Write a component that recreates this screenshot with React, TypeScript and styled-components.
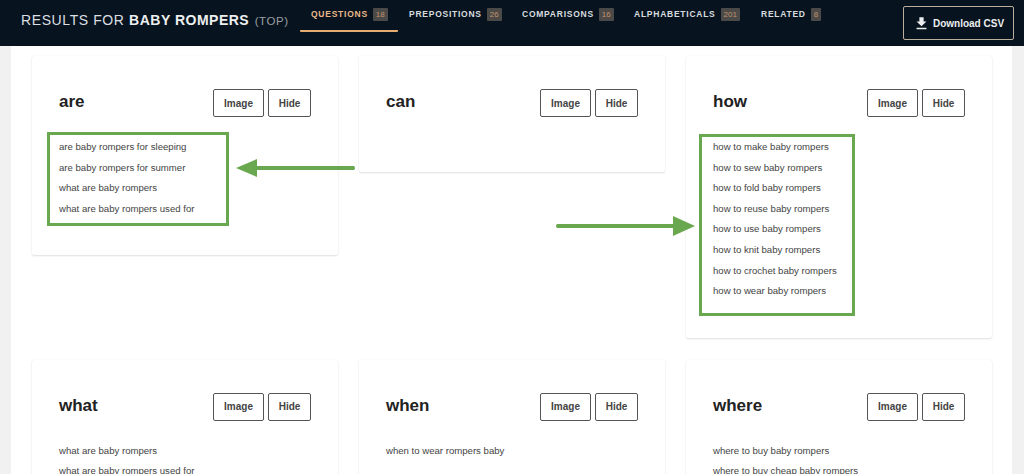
import React from 'react';
import styled, {createGlobalStyle} from 'styled-components';
import {MdFileDownload} from 'react-icons/md';

const GlobalStyle = createGlobalStyle`
  html, body {
    margin: 0;
    height: 474px;
    overflow: hidden;
    background: #f1f1f1;
    font-family: "Liberation Sans", Arial, sans-serif;
  }
`;

const Header = styled.header`
  height: 46px;
  background: #07141f;
  display: flex;
  padding: 0 10px 0 21px;
  box-sizing: border-box;
`;

const Title = styled.h1`
  margin: 0;
  width: 279px;
  flex: none;
  font-size: 14px;
  line-height: 40px;
  font-weight: 400;
  letter-spacing: 0.6px;
  color: #dcdfe1;
  white-space: nowrap;

  b {
    font-weight: 700;
    color: #eceeef;
    letter-spacing: 0.5px;
  }

  small {
    font-size: 11.5px;
    color: #9a9fa3;
    letter-spacing: 0.6px;
    margin-left: 1px;
  }
`;

const Tabs = styled.nav`
  display: flex;
  flex: 1;
  align-items: flex-start;
`;

const Tab = styled.div<{$active?: boolean; $width: number}>`
  width: ${p => p.$width}px;
  height: 32px;
  box-sizing: border-box;
  padding: 8px 0 0 11px;
  display: flex;
  gap: 5px;
  border-bottom: ${p => (p.$active ? '2px solid #e7ac72' : 'none')};
  border-radius: 1px;
  font-size: 8.5px;
  line-height: 13px;
  font-weight: 700;
  letter-spacing: 0.75px;
  color: ${p => (p.$active ? '#e9b98a' : '#d9dcdf')};
  white-space: nowrap;
`;

const Badge = styled.span`
  background: #4b4a48;
  color: #c2926a;
  padding: 0 3px;
  border-radius: 1px;
  letter-spacing: 0;
  font-size: 8px;
  font-weight: 400;
  height: 13px;
`;

const DownloadButton = styled.button`
  width: 111px;
  height: 34px;
  margin-top: 6px;
  flex: none;
  display: flex;
  align-items: center;
  justify-content: center;
  gap: 3px;
  background: transparent;
  color: #eceeef;
  border: 1px solid #bcae9d;
  border-radius: 2px;
  font-family: "Liberation Sans", Arial, sans-serif;
  font-size: 10px;
  font-weight: 700;
`;

const Main = styled.main`
  position: relative;
  margin: 0 12px 0 11px;
  height: 428px;
  background: #fff;
  padding: 10px 0 0 21px;
  box-sizing: border-box;
  overflow: hidden;
`;

const Grid = styled.div`
  display: grid;
  grid-template-columns: repeat(3, 306px);
  column-gap: 21px;
  row-gap: 22px;
  align-items: start;
`;

const Card = styled.section`
  box-sizing: border-box;
  min-height: 116px;
  padding: 33px 27px 20px;
  background: #fff;
  border-radius: 2px;
  box-shadow: 0 1px 2px rgba(0, 0, 0, 0.12), 0 0 1px rgba(0, 0, 0, 0.08);
`;

const CardHead = styled.div`
  display: flex;
  align-items: center;
  gap: 4px;
  height: 28px;
`;

const Word = styled.h2`
  margin: 0 auto 0 0;
  position: relative;
  top: -1px;
  font-size: 17px;
  font-weight: 700;
  color: #222;
`;

const SmallButton = styled.button<{$wide?: boolean}>`
  width: ${p => (p.$wide ? 51 : 43)}px;
  height: 28px;
  box-sizing: border-box;
  padding: 0;
  background: #fff;
  border: 1px solid #555;
  border-radius: 2px;
  font-family: "Liberation Sans", Arial, sans-serif;
  font-size: 10px;
  font-weight: 700;
  color: #444;
`;

const List = styled.ul`
  list-style: none;
  margin: 20px 0 16px;
  padding: 0;
`;

const Item = styled.li`
  height: 20.6px;
  line-height: 20.6px;
  font-size: 9.6px;
  color: #444;
  white-space: nowrap;
`;

const Highlight = styled.div<{$x: number; $y: number; $w: number; $h: number}>`
  position: absolute;
  left: ${p => p.$x}px;
  top: ${p => p.$y}px;
  width: ${p => p.$w}px;
  height: ${p => p.$h}px;
  box-sizing: border-box;
  border: 3px solid #6aa84f;
  pointer-events: none;
`;

const ArrowSvg = styled.svg<{$x: number; $y: number}>`
  position: absolute;
  left: ${p => p.$x}px;
  top: ${p => p.$y}px;
`;

const tabs = [
  {label: 'QUESTIONS', count: 18, width: 98, active: true},
  {label: 'PREPOSITIONS', count: 26, width: 113},
  {label: 'COMPARISONS', count: 16, width: 112},
  {label: 'ALPHABETICALS', count: 201, width: 127},
  {label: 'RELATED', count: 8, width: 70},
];

const cards = [
  {word: 'are', items: ['are baby rompers for sleeping', 'are baby rompers for summer', 'what are baby rompers', 'what are baby rompers used for']},
  {word: 'can', items: []},
  {
    word: 'how',
    items: [
      'how to make baby rompers',
      'how to sew baby rompers',
      'how to fold baby rompers',
      'how to reuse baby rompers',
      'how to use baby rompers',
      'how to knit baby rompers',
      'how to crochet baby rompers',
      'how to wear baby rompers',
    ],
  },
  {word: 'what', items: ['what are baby rompers', 'what are baby rompers used for']},
  {word: 'when', items: ['when to wear rompers baby']},
  {word: 'where', items: ['where to buy baby rompers', 'where to buy cheap baby rompers']},
];

const App = (): JSX.Element => (
  <>
    <GlobalStyle />
    <Header>
      <Title>
        RESULTS FOR <b>BABY ROMPERS</b> <small>(TOP)</small>
      </Title>
      <Tabs>
        {tabs.map(t => (
          <Tab key={t.label} $active={t.active} $width={t.width}>
            {t.label}
            <Badge>{t.count}</Badge>
          </Tab>
        ))}
      </Tabs>
      <DownloadButton>
        <MdFileDownload size={17} />
        Download CSV
      </DownloadButton>
    </Header>
    <Main>
      <Grid>
        {cards.map(c => (
          <Card key={c.word}>
            <CardHead>
              <Word>{c.word}</Word>
              <SmallButton $wide>Image</SmallButton>
              <SmallButton>Hide</SmallButton>
            </CardHead>
            {c.items.length > 0 && (
              <List>
                {c.items.map(i => (
                  <Item key={i}>{i}</Item>
                ))}
              </List>
            )}
          </Card>
        ))}
      </Grid>
      <Highlight $x={36} $y={86} $w={182} $h={94} />
      <Highlight $x={688} $y={88} $w={156} $h={182} />
      <ArrowSvg $x={224} $y={110} width={122} height={24} viewBox="0 0 122 24">
        <path d="M1 12 L22 3 L22 10 L119 10 Q121 12 119 14 L22 14 L22 21 Z" fill="#6aa84f" />
      </ArrowSvg>
      <ArrowSvg $x={543} $y={168} width={142} height={24} viewBox="0 0 142 24">
        <path d="M141 12 L119 2 L119 10 L3 10 Q1 12 3 14 L119 14 L119 22 Z" fill="#6aa84f" />
      </ArrowSvg>
    </Main>
  </>
);

export default App;
